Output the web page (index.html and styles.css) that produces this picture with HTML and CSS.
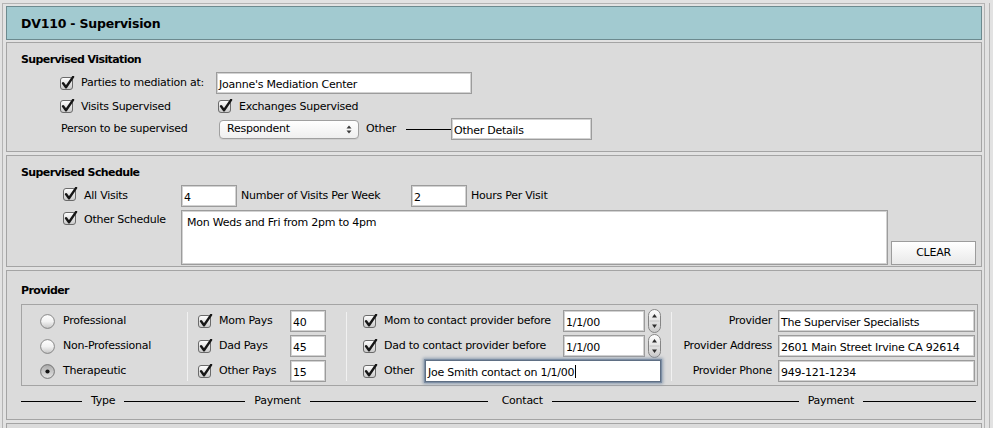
FILE: index.html
```html
<!DOCTYPE html>
<html lang="en">
<head>
<meta charset="utf-8">
<title>DV110 - Supervision</title>
<link rel="stylesheet" href="styles.css">
</head>
<body>
<svg class="defs" width="0" height="0" aria-hidden="true" focusable="false">
  <defs>
    <linearGradient id="g-box" x1="0" y1="0" x2="0" y2="1">
      <stop offset="0" stop-color="#ffffff"/>
      <stop offset="1" stop-color="#c9c9c9"/>
    </linearGradient>
    <linearGradient id="g-radio" x1="0" y1="0" x2="0" y2="1">
      <stop offset="0" stop-color="#ffffff"/>
      <stop offset="0.5" stop-color="#f2f2f2"/>
      <stop offset="1" stop-color="#c6c6c6"/>
    </linearGradient>
    <linearGradient id="g-on" x1="0" y1="0" x2="0" y2="1">
      <stop offset="0" stop-color="#a9a9a9"/>
      <stop offset="1" stop-color="#e6e6e6"/>
    </linearGradient>
    <symbol id="i-check" viewBox="0 0 15 15">
      <rect x="0.5" y="1.5" width="12" height="12" rx="2.5" fill="url(#g-box)" stroke="#6a6a6a"/>
      <path d="M3.1 7.3 L6 11.2 L13.1 0.9" fill="none" stroke="#161616" stroke-width="2.4" stroke-linecap="round" stroke-linejoin="round"/>
    </symbol>
    <symbol id="i-radio" viewBox="0 0 15 15">
      <circle cx="7.5" cy="7.5" r="6.9" fill="url(#g-radio)" stroke="#7a7a7a" stroke-width="0.9"/>
    </symbol>
    <symbol id="i-radio-on" viewBox="0 0 15 15">
      <circle cx="7.5" cy="7.5" r="6.9" fill="url(#g-on)" stroke="#6a6a6a" stroke-width="0.9"/>
      <circle cx="7.5" cy="7.5" r="2.1" fill="#141414"/>
    </symbol>
    <symbol id="i-updown" viewBox="0 0 6 9">
      <path d="M0.5 3.5 L3 0.5 L5.5 3.5Z M0.5 5.5 L3 8.5 L5.5 5.5Z" fill="#3a3a3a"/>
    </symbol>
    <symbol id="i-stepper" viewBox="0 0 13 24">
      <rect x="0.5" y="0.5" width="12" height="23" rx="6" fill="url(#g-box)" stroke="#858585"/>
      <line x1="1.5" y1="12" x2="11.5" y2="12" stroke="#c4c4c4"/>
      <path d="M4 8.5 L6.5 5 L9 8.5Z M4 15.5 L6.5 19 L9 15.5Z" fill="#2e2e2e"/>
    </symbol>
  </defs>
</svg>

<div class="frame">
  <header class="title-bar"><h1>DV110 - Supervision</h1></header>

  <section class="panel panel-visitation">
    <h2>Supervised Visitation</h2>
    <div class="rows v-rows">
      <div class="row h22">
        <label class="check v-cell"><svg class="cb"><use href="#i-check"/></svg><span>Parties to mediation at:</span></label>
        <span class="field f-parties">Joanne's Mediation Center</span>
      </div>
      <div class="row h19 r2">
        <label class="check v-cell"><svg class="cb"><use href="#i-check"/></svg><span>Visits Supervised</span></label>
        <label class="check exch"><svg class="cb"><use href="#i-check"/></svg><span>Exchanges Supervised</span></label>
      </div>
      <div class="row h22">
        <span class="v-cell person">Person to be supervised</span>
        <span class="popup"><span>Respondent</span><svg class="updown"><use href="#i-updown"/></svg></span>
        <span class="other-word">Other</span>
        <span class="hline"></span>
        <span class="field f-otherdetails">Other Details</span>
      </div>
    </div>
  </section>

  <section class="panel panel-schedule">
    <h2>Supervised Schedule</h2>
    <div class="rows s-rows">
      <div class="row h22">
        <label class="check s-cell"><svg class="cb raise"><use href="#i-check"/></svg><span>All Visits</span></label>
        <span class="field f-num">4</span>
        <span class="s-label">Number of Visits Per Week</span>
        <span class="field f-num">2</span>
        <span class="s-label2">Hours Per Visit</span>
      </div>
      <div class="row memo-row">
        <label class="check s-cell top"><svg class="cb raise"><use href="#i-check"/></svg><span>Other Schedule</span></label>
        <div class="memo">Mon Weds and Fri from 2pm to 4pm</div>
        <button class="btn" type="button">CLEAR</button>
      </div>
    </div>
  </section>

  <section class="panel panel-provider">
    <h2>Provider</h2>
    <div class="provider-box">
      <div class="pcol type-col">
        <div class="prow"><svg class="rb"><use href="#i-radio"/></svg><span>Professional</span></div>
        <div class="prow"><svg class="rb"><use href="#i-radio"/></svg><span>Non-Professional</span></div>
        <div class="prow"><svg class="rb"><use href="#i-radio-on"/></svg><span>Therapeutic</span></div>
      </div>
      <div class="vsep"></div>
      <div class="pcol pay-col">
        <div class="prow"><svg class="cb"><use href="#i-check"/></svg><span class="grow">Mom Pays</span><span class="field f-pay">40</span></div>
        <div class="prow"><svg class="cb"><use href="#i-check"/></svg><span class="grow">Dad Pays</span><span class="field f-pay">45</span></div>
        <div class="prow"><svg class="cb"><use href="#i-check"/></svg><span class="grow">Other Pays</span><span class="field f-pay">15</span></div>
      </div>
      <div class="vsep"></div>
      <div class="pcol contact-col">
        <div class="prow"><svg class="cb"><use href="#i-check"/></svg><span class="grow">Mom to contact provider before</span><span class="field f-date">1/1/00</span><svg class="stepper"><use href="#i-stepper"/></svg></div>
        <div class="prow"><svg class="cb"><use href="#i-check"/></svg><span class="grow">Dad to contact provider before</span><span class="field f-date">1/1/00</span><svg class="stepper"><use href="#i-stepper"/></svg></div>
        <div class="prow"><svg class="cb"><use href="#i-check"/></svg><span class="c-other">Other</span><span class="field f-focus">Joe Smith contact on 1/1/00<span class="caret"></span></span></div>
      </div>
      <div class="vsep"></div>
      <div class="info-col">
        <span class="i-label">Provider</span><span class="field">The Superviser Specialists</span>
        <span class="i-label">Provider Address</span><span class="field">2601 Main Street Irvine CA 92614</span>
        <span class="i-label">Provider Phone</span><span class="field">949-121-1234</span>
      </div>
    </div>
    <div class="legend">
      <span class="lg-line l1"></span><span class="lg-text">Type</span>
      <span class="lg-line l2"></span><span class="lg-text">Payment</span>
      <span class="lg-line l3"></span><span class="lg-text t-contact">Contact</span>
      <span class="lg-line l4"></span><span class="lg-text">Payment</span>
      <span class="lg-line l5"></span>
    </div>
  </section>

  <section class="panel panel-next"></section>
</div>
<div class="rail"></div>
</body>
</html>
```

FILE: styles.css
```css
* { box-sizing: border-box; }

html, body {
  margin: 0;
  height: 100%;
  overflow: hidden;
}

body {
  background: #e2e2e2;
  font-family: "Lucida Grande", "DejaVu Sans", sans-serif;
  font-size: 11px;
  line-height: 14px;
  letter-spacing: -0.25px;
  color: #000;
  display: flex;
  align-items: stretch;
  padding: 3px 0 0 2px;
}

.defs { display: block; width: 0; height: 0; overflow: hidden; flex: none; }

.frame {
  width: 983px;
  flex: none;
  border: 1px solid #b4b4b4;
  border-bottom: none;
  padding: 2px 2px 0 3px;
  background: #e2e2e2;
}

.rail {
  flex: 1;
  margin-left: 4px;
  border-left: 1px solid #b4b4b4;
}

/* header */
.title-bar {
  height: 34px;
  background: #a2cad0;
  border: 1px solid #6c8a8f;
  padding-left: 14px;
  display: flex;
  align-items: center;
}
.title-bar h1 {
  margin: 0;
  font-size: 12.5px;
  font-weight: bold;
  letter-spacing: -0.2px;
  padding-top: 1px;
}

/* panels */
.panel {
  background: #dbdbdb;
  border: 1px solid #a4a4a4;
  margin-top: 3px;
  padding: 9px 2px 11px 14px;
}
.panel-visitation { margin-top: 2px; }
.panel-schedule { padding-bottom: 1px; }
.panel-provider { padding-top: 12px; padding-bottom: 11px; }
.panel-next { height: 6px; padding: 0; border-bottom: none; }

.panel h2 {
  margin: 0;
  font-size: 11px;
  font-weight: bold;
  letter-spacing: -0.6px;
  line-height: 14px;
  padding-top: 1px;
}

.rows { margin-top: 5px; display: flex; flex-direction: column; }
.v-rows { padding-left: 39px; gap: 2px; }
.s-rows { padding-left: 42px; gap: 3px; }

.row { display: flex; align-items: center; }
.h22 { height: 22px; }
.h19 { height: 19px; }
.r2 { margin-top: 1px; }

.check { display: flex; align-items: center; }
.cb { width: 15px; height: 15px; flex: none; margin-right: 6px; }
.cb.raise { margin-top: -4px; }
.rb { width: 15px; height: 15px; flex: none; margin-right: 8px; }

.v-cell { width: 156px; flex: none; }
.exch { margin-left: 2px; }
.person { margin-left: 1px; width: 155px; }

/* fields */
.field {
  display: block;
  height: 22px;
  background: #fff;
  border: 1px solid #9c9c9c;
  box-shadow: inset 0 0 0 1px #d2d2d2;
  padding: 3px 2px 0;
  line-height: 18px;
  white-space: nowrap;
  overflow: hidden;
  flex: none;
}
.f-parties { width: 256px; }
.f-otherdetails { width: 141px; }
.f-num { width: 56px; }
.f-pay { width: 36px; }
.f-date { width: 82px; }

.popup {
  margin-left: 3px;
  width: 140px;
  height: 19px;
  flex: none;
  border: 1px solid #a0a0a0;
  border-radius: 4px;
  background: linear-gradient(#ffffff, #efefef);
  box-shadow: 0 1px 0 rgba(0, 0, 0, 0.06);
  display: flex;
  align-items: center;
  justify-content: space-between;
  padding: 0 6px 0 7px;
}
.updown { width: 6px; height: 9px; }

.other-word { margin-left: 7px; width: 33px; flex: none; }
.hline { width: 45px; height: 1px; background: #000; margin-left: 7px; flex: none; }

/* schedule */
.s-cell { width: 118px; flex: none; }
.s-cell.top { align-self: flex-start; height: 20px; }
.s-label { margin-left: 4px; width: 170px; flex: none; }
.s-label2 { margin-left: 4px; }
.memo-row { align-items: stretch; }
.memo {
  width: 707px;
  height: 55px;
  flex: none;
  background: #fff;
  border: 1px solid #9c9c9c;
  box-shadow: inset 0 0 0 1px #d2d2d2;
  padding: 5px 5px 0;
}
.btn {
  align-self: flex-end;
  margin-left: 3px;
  width: 85px;
  height: 24px;
  padding: 0;
  border: 1px solid #9c9c9c;
  background: linear-gradient(#ffffff, #e9e9e9);
  font: inherit;
  letter-spacing: -0.25px;
  color: #000;
}

/* provider */
.provider-box {
  margin-top: 6px;
  margin-right: 1px;
  border: 1px solid #a4a4a4;
  display: flex;
  padding: 4px 0 2px;
}
.pcol { display: flex; flex-direction: column; gap: 1px; flex: none; }
.prow { height: 24px; display: flex; align-items: center; }
.type-col { width: 165px; padding-left: 18px; }
.pay-col { width: 158px; padding: 0 20px 0 10px; }
.contact-col { width: 324px; padding: 0 10px 0 16px; }
.grow { flex: 1; }
.stepper { width: 13px; height: 24px; margin-left: 3px; flex: none; }
.c-other { width: 41px; flex: none; }
.f-focus {
  flex: 1;
  border-color: #5f6f84;
  box-shadow: 0 0 0 1px #7d8ea4, 0 0 3px 2px #8e9db0;
}
.caret {
  display: inline-block;
  width: 1px;
  height: 13px;
  background: #000;
  vertical-align: -2px;
  margin-left: 1px;
}
.vsep { width: 1px; background: #f1f1f1; margin: 3px 0 2px; flex: none; }

.info-col {
  flex: 1;
  display: grid;
  grid-template-columns: 100px 197px;
  grid-auto-rows: 24px;
  column-gap: 6px;
  row-gap: 1px;
  align-items: center;
}
.i-label { text-align: right; white-space: nowrap; }

/* legend */
.legend {
  margin-top: 8px;
  margin-right: 3px;
  height: 14px;
  display: flex;
  align-items: center;
}
.lg-line { height: 1px; background: #000; flex: none; }
.l1 { width: 61px; }
.l2 { width: 121px; }
.l3 { width: 178px; }
.l4 { width: 247px; }
.l5 { flex: 1; }
.lg-text { margin: 0 9px; white-space: nowrap; }
.t-contact { margin-left: 14px; }
```
